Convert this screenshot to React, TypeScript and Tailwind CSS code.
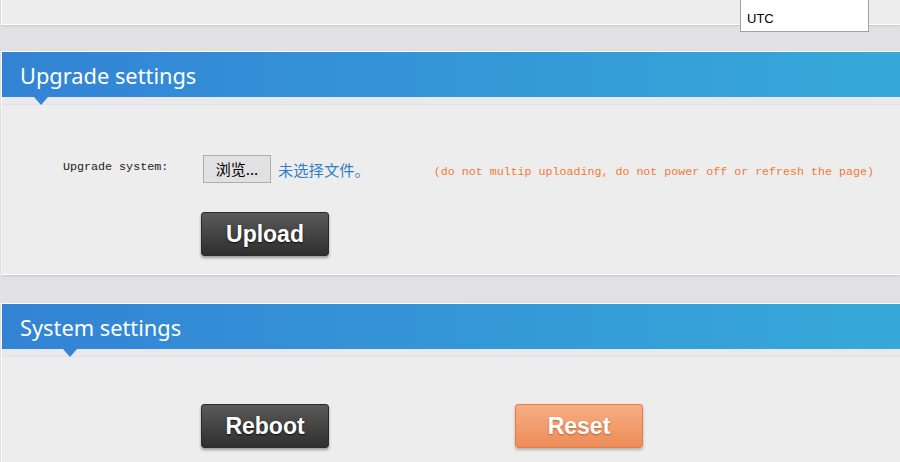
import React from "react"

const sans = { fontFamily: '"Noto Sans", "Open Sans", sans-serif' }

function SectionHeader({ title, arrowLeft }: { title: string; arrowLeft: string }) {
  return (
    <div className="relative">
      <div
        className="h-[45px] bg-gradient-to-r from-[#3383d5] to-[#36a9d9] pl-[18px] pt-[4px] flex items-center text-white text-[21.8px]"
        style={sans}
      >
        {title}
      </div>
      <div
        className={`absolute top-[45px] ${arrowLeft} w-0 h-0 border-l-[7px] border-r-[7px] border-t-[8px] border-l-transparent border-r-transparent border-t-[#3386d5]`}
      />
      <div className="h-[8px] bg-[#e9e9eb] border-b border-[#dde3ec]" />
    </div>
  )
}

function DarkButton({ label }: { label: string }) {
  return (
    <button
      className="w-[128px] h-[44px] rounded-[3px] border border-[#2b2b2b] bg-gradient-to-b from-[#5a5a5a] to-[#2f2f2f] text-white font-bold text-[23px] shadow-[0_2px_3px_rgba(0,0,0,0.35)] [text-shadow:0_1px_2px_rgba(0,0,0,0.8)]"
      style={{ fontFamily: '"Liberation Sans", Arial, sans-serif' }}
    >
      {label}
    </button>
  )
}

export default function App() {
  return (
    <div className="w-[900px] h-[462px] overflow-hidden bg-[#e1e1e3] pl-[1px]">
      {/* top panel remnant */}
      <div className="relative h-[25px] bg-[#ededed] border-l border-b border-white shadow-[0_1px_2px_rgba(0,0,0,0.12)]">
        <div
          className="absolute left-[738px] top-0 w-[129px] h-[32px] bg-white border border-t-0 border-[#a0a0a0] pl-[6px] pt-[9px] text-[13px] text-black z-10"
          style={{ fontFamily: '"Liberation Sans", Arial, sans-serif' }}
        >
          UTC
        </div>
      </div>

      {/* Upgrade settings */}
      <div className="mt-[26px] border-t border-l border-white">
        <SectionHeader title="Upgrade settings" arrowLeft="left-[32px]" />
        <div className="h-[170px] bg-[#ededed] border-b border-white shadow-[0_1px_2px_rgba(0,0,0,0.12)]">
          <div className="flex items-center pt-[50px]">
            <span
              className="ml-[61px] w-[139px] text-[11.7px] text-[#222] -mt-[3px]"
              style={{ fontFamily: '"Liberation Mono", "Courier New", monospace' }}
            >
              Upgrade system:
            </span>
            <span
              className="ml-[1px] h-[28px] w-[68px] flex items-center justify-center bg-[#e1e1e1] border border-[#adadad] text-[15px] text-black"
              style={{ fontFamily: '"Noto Sans CJK SC", sans-serif' }}
            >
              浏览...
            </span>
            <span
              className="ml-[7px] text-[15.3px] text-[#2f7fc6]"
              style={{ fontFamily: '"Noto Sans CJK SC", sans-serif' }}
            >
              未选择文件。
            </span>
            <span
              className="ml-[64px] mt-[5px] text-[11.65px] text-[#f07a35]"
              style={{ fontFamily: '"Liberation Mono", "Courier New", monospace' }}
            >
              (do not multip uploading, do not power off or refresh the page)
            </span>
          </div>
          <div className="pl-[199px] pt-[29px]">
            <DarkButton label="Upload" />
          </div>
        </div>
      </div>

      {/* System settings */}
      <div className="mt-[28px] border-t border-l border-white">
        <SectionHeader title="System settings" arrowLeft="left-[61px]" />
        <div className="h-[120px] bg-[#ededed]">
          <div className="flex pt-[47px] pl-[199px] gap-[186px]">
            <DarkButton label="Reboot" />
            <button
              className="w-[128px] h-[44px] rounded-[3px] border border-[#e27c4a] bg-gradient-to-b from-[#f6ad84] to-[#ee8c58] text-white font-bold text-[23px] shadow-[0_2px_3px_rgba(0,0,0,0.25)] [text-shadow:0_1px_2px_rgba(150,60,20,0.6)]"
              style={{ fontFamily: '"Liberation Sans", Arial, sans-serif' }}
            >
              Reset
            </button>
          </div>
        </div>
      </div>
    </div>
  )
}
